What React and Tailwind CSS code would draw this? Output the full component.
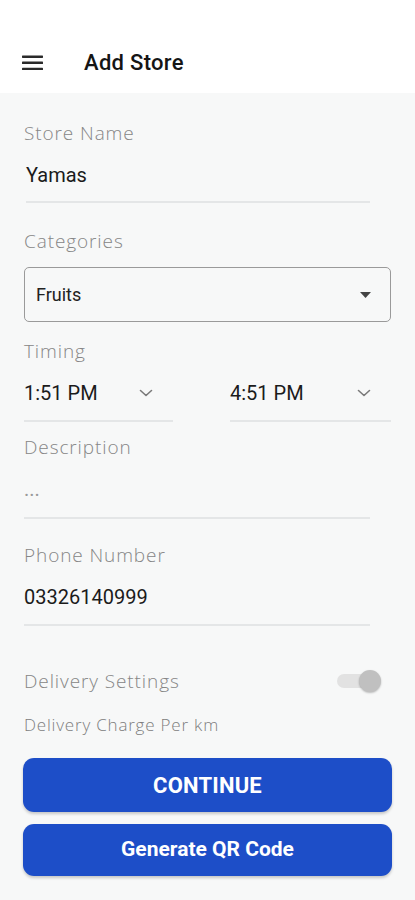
import React from "react";

const labelFont = { fontFamily: '"Open Sans", "Noto Sans", sans-serif' };

const Label = ({ children, className = "" }) => (
  <div
    className={`text-[19px] leading-[28px] font-light tracking-[0.9px] text-[#868686] ${className}`}
    style={labelFont}>
    {children}
  </div>
);

const Chevron = () => (
  <svg width="14" height="8" viewBox="0 0 14 8" fill="none">
    <path d="M1.5 1.5 L7 6.5 L12.5 1.5" stroke="#7a7a7a" strokeWidth="1.6" strokeLinecap="round" strokeLinejoin="round" />
  </svg>
);

const TimeField = ({ value, className = "" }) => (
  <div className={className}>
    <div className="flex items-center justify-between h-[28px] text-[20px] text-[#1b1b1b]">
      <span>{value}</span>
      <span className="mr-[20px]">
        <Chevron />
      </span>
    </div>
    <div className="mt-[13px] h-[2px] bg-[#e4e6e7]"></div>
  </div>
);

export default function App() {
  return (
    <div
      className="h-[900px] w-[415px] flex flex-col bg-[#f7f8f8] overflow-hidden"
      style={{ fontFamily: 'Roboto, "Liberation Sans", sans-serif' }}>
      {/* header */}
      <div className="h-[93px] shrink-0 bg-white flex items-center pt-[32px] px-[22px]">
        <svg width="22" height="16" viewBox="0 0 22 16">
          <rect x="0" y="0.5" width="21" height="2.4" rx="0.6" fill="#2a2a2a" />
          <rect x="0" y="6.6" width="21" height="2.4" rx="0.6" fill="#2a2a2a" />
          <rect x="0" y="12.7" width="21" height="2.4" rx="0.6" fill="#2a2a2a" />
        </svg>
        <h1 className="ml-[40px] text-[22px] tracking-[0.3px] font-medium text-[#151515]">Add Store</h1>
      </div>

      {/* form */}
      <div className="h-[642px] shrink-0 overflow-hidden px-[24px] pt-[26px]">
        <Label>Store Name</Label>
        <div className="mt-[14px] pl-[2px] leading-[28px] text-[20px] text-[#1b1b1b]">Yamas</div>
        <div className="mt-[12px] ml-[2px] w-[344px] h-[2px] bg-[#e4e6e7]"></div>

        <Label className="mt-[24px]">Categories</Label>
        <div className="mt-[12px] h-[55px] rounded-[5px] border border-[#9a9a9a] flex items-center justify-between pl-[11px] pr-[19px]">
          <span className="text-[18px] text-[#222]">Fruits</span>
          <svg width="11" height="6" viewBox="0 0 11 6">
            <path d="M0 0 H11 L5.5 6 Z" fill="#444" />
          </svg>
        </div>

        <Label className="mt-[15px]">Timing</Label>
        <div className="mt-[14px] flex justify-between">
          <TimeField value="1:51 PM" className="w-[149px]" />
          <TimeField value="4:51 PM" className="w-[161px]" />
        </div>

        <Label className="mt-[11px]">Description</Label>
        <div className="mt-[14px] leading-[28px] text-[20px] text-[#9a9a9a]">...</div>
        <div className="mt-[14px] w-[346px] h-[2px] bg-[#e4e6e7]"></div>

        <Label className="mt-[22px]">Phone Number</Label>
        <div className="mt-[14px] leading-[28px] text-[20px] text-[#1b1b1b]">03326140999</div>
        <div className="mt-[13px] w-[346px] h-[2px] bg-[#e4e6e7]"></div>

        <div className="mt-[41px] flex items-center justify-between">
          <Label>Delivery Settings</Label>
          <div className="relative w-[44px] h-[24px] mr-[10px] flex items-center">
            <div className="w-[36px] h-[14px] rounded-full bg-[#e2e2e2]"></div>
            <div className="absolute right-0 top-[1px] w-[22px] h-[22px] rounded-full bg-[#c0c0c0] shadow-[0_1px_2px_rgba(0,0,0,0.25)]"></div>
          </div>
        </div>

        <div
          className="mt-[18px] text-[17px] leading-[24px] font-light tracking-[0.8px] text-[#7d7d7d]"
          style={labelFont}>
          Delivery Charge Per km
        </div>
      </div>

      {/* actions */}
      <div className="px-[23px] pt-[23px] flex flex-col gap-[12px]">
        <button className="h-[54px] w-full rounded-[11px] bg-[#1d4ec8] text-white text-[22px] font-bold tracking-[0.2px] shadow-[0_2px_3px_rgba(0,0,0,0.2)]">
          CONTINUE
        </button>
        <button className="h-[52px] w-full rounded-[11px] bg-[#1d4ec8] text-white text-[21px] font-bold shadow-[0_2px_3px_rgba(0,0,0,0.2)]">
          Generate QR Code
        </button>
      </div>
    </div>
  );
}
